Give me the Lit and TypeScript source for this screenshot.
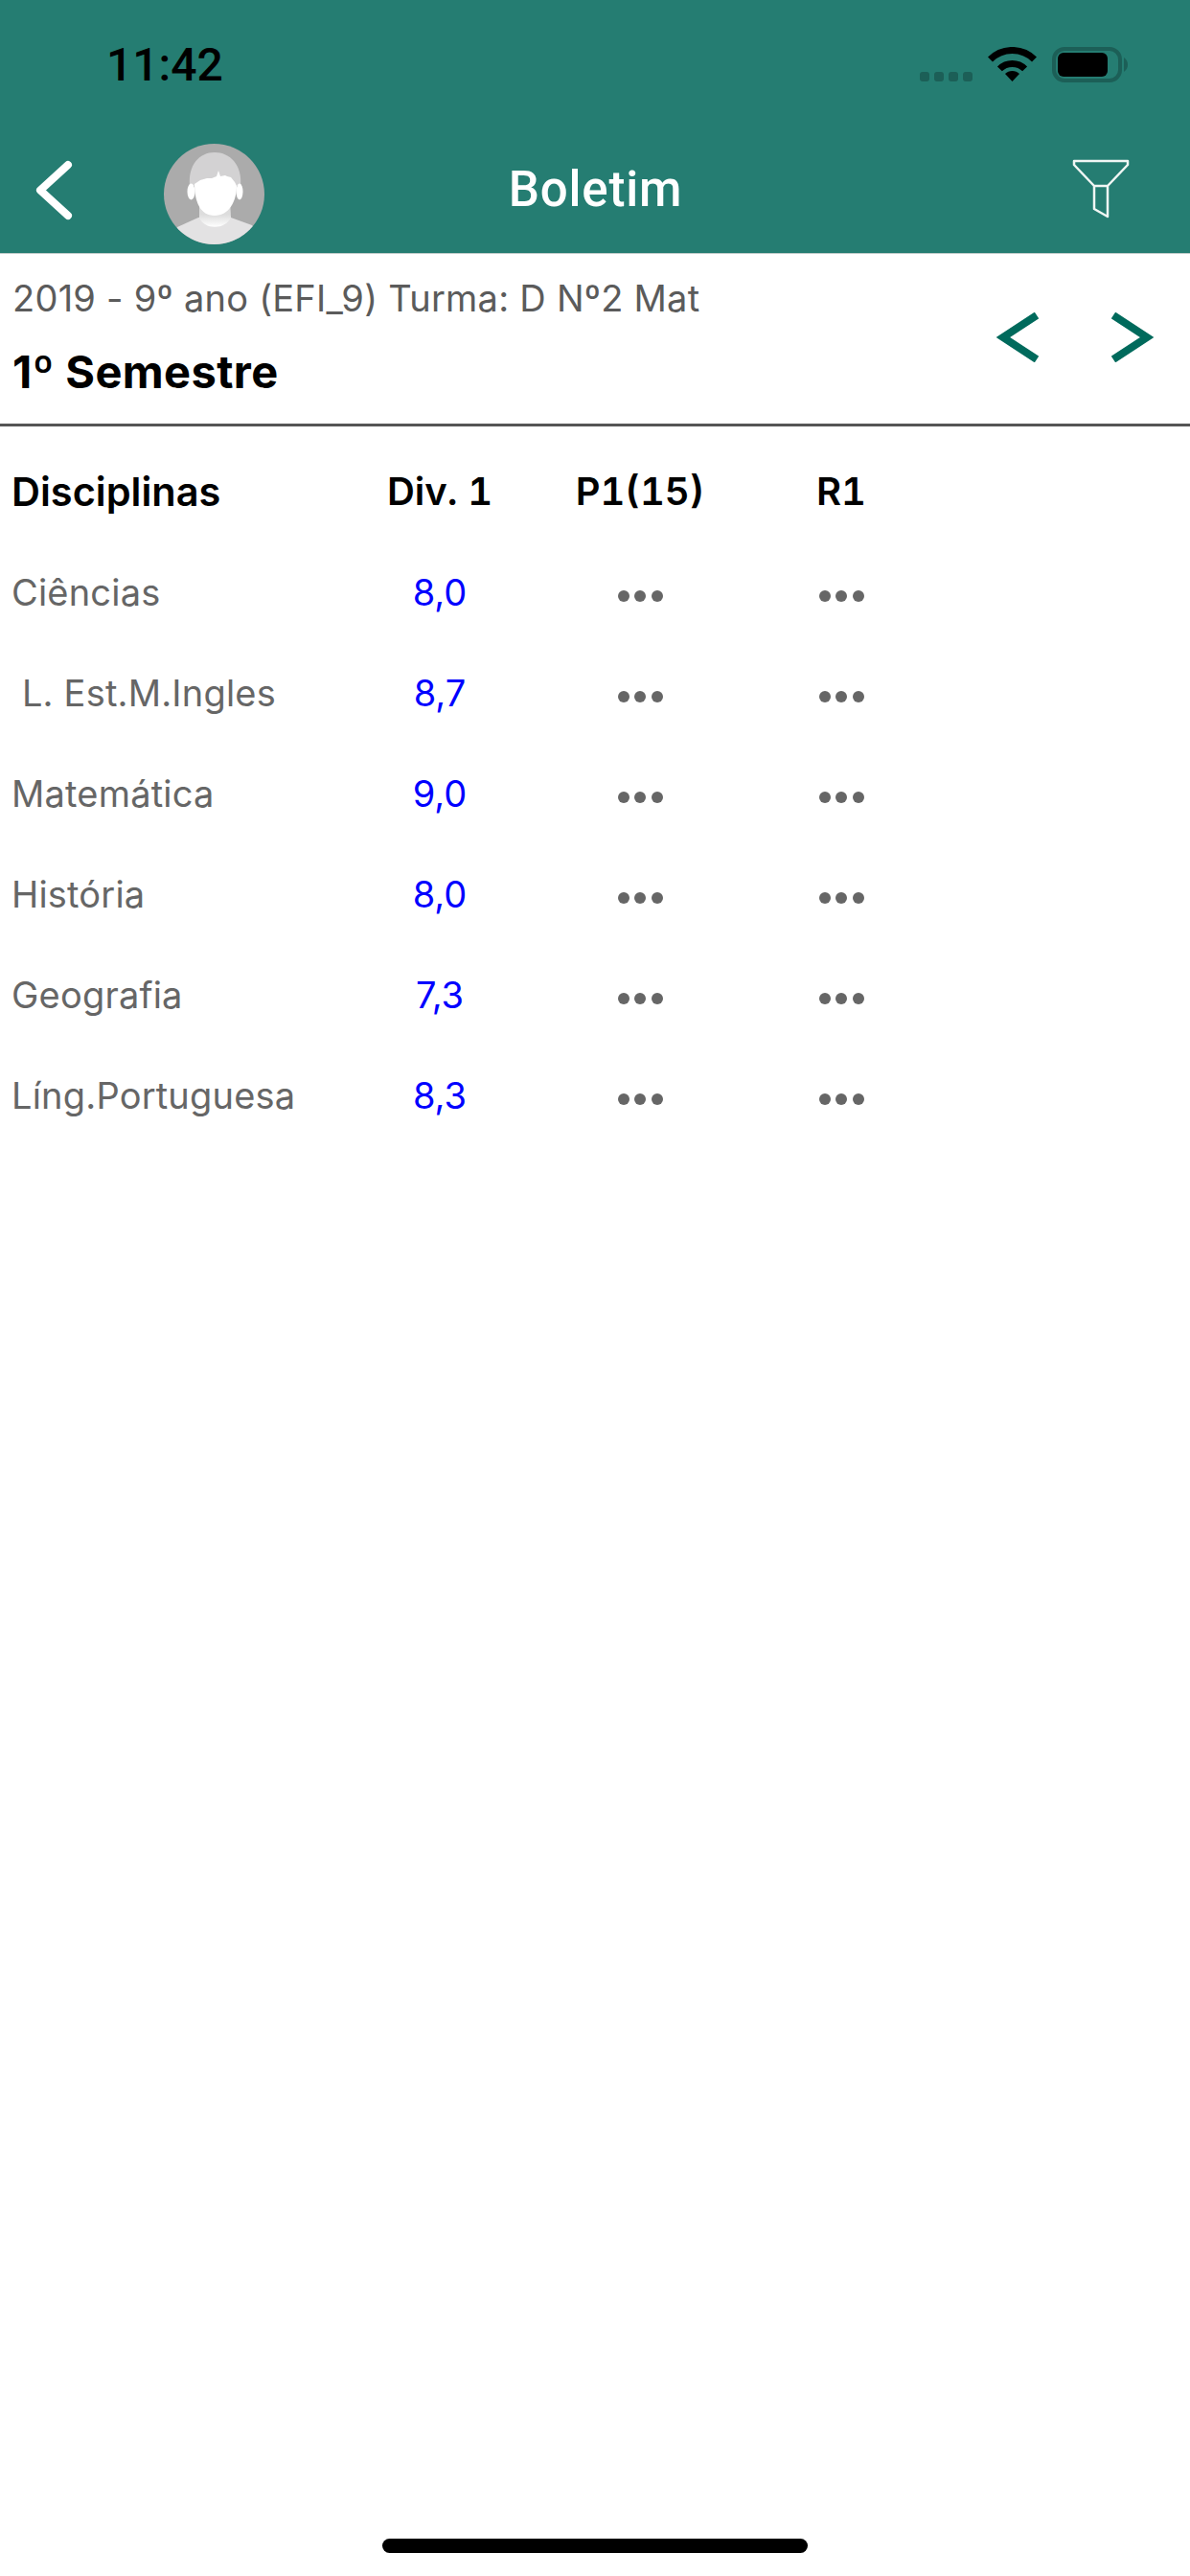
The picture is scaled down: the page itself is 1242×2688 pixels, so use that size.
import { LitElement, html, css } from "lit";
import { customElement } from "lit/decorators.js";

const rows = [
  { name: "Ciências", div: "8,0" },
  { name: " L. Est.M.Ingles", div: "8,7" },
  { name: "Matemática", div: "9,0" },
  { name: "História", div: "8,0" },
  { name: "Geografia", div: "7,3" },
  { name: "Líng.Portuguesa", div: "8,3" },
];

@customElement("app-root")
export class AppRoot extends LitElement {
  static styles = css`
    :host {
      display: block;
      width: 1242px;
      height: 2688px;
      background: #fff;
      font-family: Inter, "Liberation Sans", sans-serif;
      position: relative;
      overflow: hidden;
    }
    .head {
      height: 264px;
      background: #257d72;
      border-bottom: 1px solid #c4cfcc;
      display: flex;
      flex-direction: column;
    }
    .status {
      height: 132px;
      display: flex;
      align-items: flex-start;
      justify-content: space-between;
      padding: 0 65px 0 111px;
    }
    .time {
      margin-top: 42px;
      font-family: Roboto, sans-serif;
      font-size: 48px;
      line-height: 52px;
      font-weight: 500;
      color: #000;
    }
    .status-icons {
      display: block;
      margin-top: 49px;
    }
    .nav {
      position: relative;
      flex: 1;
      display: flex;
      align-items: flex-start;
    }
    .back {
      margin: 32px 0 0 34px;
      display: block;
    }
    .avatar {
      margin: 18px 0 0 91px;
      display: block;
    }
    .title {
      position: absolute;
      left: 1px;
      right: 0;
      top: 37px;
      text-align: center;
      color: #fff;
      font-family: Roboto, sans-serif;
      font-size: 51px;
      line-height: 58px;
      font-weight: 500;
      letter-spacing: 0.8px;
    }
    .filter {
      margin: 34px 63px 0 auto;
      display: block;
    }
    .term {
      height: 177px;
      border-bottom: 3px solid #555;
      display: flex;
      justify-content: space-between;
    }
    .term-text {
      padding: 22px 0 0 13px;
    }
    .line {
      font-size: 38px;
      line-height: 48px;
      letter-spacing: 0.25px;
      color: #5b5b5b;
      white-space: pre;
    }
    .sem {
      margin-top: 25px;
      font-size: 47px;
      line-height: 56px;
      font-weight: 700;
      letter-spacing: 0.4px;
      color: #000;
    }
    .arrows {
      display: flex;
      gap: 76px;
      padding: 61px 38px 0 0;
      align-items: flex-start;
    }
    .arrows svg {
      display: block;
    }
    .table {
      padding-top: 15px;
    }
    .row {
      display: grid;
      grid-template-columns: 343px 208px 210px 210px;
      height: 105px;
      align-items: center;
      padding-left: 12px;
    }
    .row.th {
      font-size: 40px;
      font-weight: 600;
      font-variant-numeric: tabular-nums;
      color: #000;
    }
    .row.th .first {
      font-size: 41.5px;
    }
    .row .c {
      text-align: center;
    }
    .name {
      font-size: 38px;
      letter-spacing: 0.2px;
      color: #666;
      white-space: pre;
    }
    .val {
      font-size: 38px;
      color: #0000ff;
    }
    .dots {
      display: flex;
      justify-content: center;
      gap: 5.5px;
      padding-top: 9px;
    }
    .dots i {
      width: 12px;
      height: 12px;
      border-radius: 50%;
      background: #666;
    }
    .home {
      position: absolute;
      left: 399px;
      top: 2649px;
      width: 444px;
      height: 15px;
      border-radius: 8px;
      background: #000;
    }
  `;

  private dots() {
    return html`<div class="dots"><i></i><i></i><i></i></div>`;
  }

  render() {
    return html`
      <div class="head">
        <div class="status">
          <div class="time">11:42</div>
          <svg class="status-icons" width="217" height="38" viewBox="0 0 217 38">
            <g fill="#1c5f57">
              <rect x="0" y="26" width="10" height="10" rx="3" />
              <rect x="15" y="26" width="10" height="10" rx="3" />
              <rect x="30" y="26" width="10" height="10" rx="3" />
              <rect x="45" y="26" width="10" height="10" rx="3" />
            </g>
            <path d="M73.5 13 A32.5 32.5 0 0 1 119.5 13" fill="none" stroke="#000" stroke-width="7" />
            <path d="M83.4 22.9 A18.5 18.5 0 0 1 109.6 22.9" fill="none" stroke="#000" stroke-width="7" />
            <path d="M96.5 36 L89 28 A10.6 10.6 0 0 1 104 28 Z" fill="#000" />
            <rect x="140" y="2" width="69" height="33" rx="11" fill="none" stroke="#1c5f57" stroke-width="4" />
            <rect x="144" y="6" width="52" height="25" rx="6" fill="#000" />
            <path d="M213 11 C216 13 217 16 217 18.5 C217 21 216 24 213 26 Z" fill="#1c5f57" />
          </svg>
        </div>
        <div class="nav">
          <svg class="back" width="46" height="70" viewBox="0 0 46 70">
            <path d="M37 8 L8 34.5 L37 61" fill="none" stroke="#fff" stroke-width="8" stroke-linecap="round" stroke-linejoin="round" />
          </svg>
          <svg class="avatar" width="105" height="105" viewBox="0 0 105 105">
            <defs>
              <clipPath id="av"><circle cx="52.5" cy="52.5" r="52.5" /></clipPath>
              <linearGradient id="neck" x1="0" y1="0" x2="0" y2="1">
                <stop offset="0.55" stop-color="#dddddd" />
                <stop offset="1" stop-color="#ffffff" />
              </linearGradient>
            </defs>
            <g clip-path="url(#av)">
              <rect width="105" height="105" fill="#ababab" />
              <path d="M27 44 C25 22 37 9 53 9 C69 9 82 22 80 44 Z" fill="#d3d2d3" />
              <path d="M14 87 L36 77 L70 77 L92 85 L105 105 L0 105 Z" fill="#e3e2e3" />
              <path d="M37 58 L37 77 C42 90 64 90 70 77 L69 58 Z" fill="url(#neck)" />
              <ellipse cx="28.5" cy="50" rx="4" ry="8.5" fill="#fff" />
              <ellipse cx="79" cy="50" rx="3.5" ry="8.5" fill="#fff" />
              <path d="M32 42 L38 38 L45 36 L50 36 L55 34 L57 28 L59 34 L64 33 L66 34 L70 35 L74 40 L76 44 C76 60 68 75 53 75 C38 75 32 60 32 42 Z" fill="#fff" />
            </g>
          </svg>
          <div class="title">Boletim</div>
          <svg class="filter" width="60" height="62" viewBox="0 0 60 62">
            <path d="M2 2 L58 2 L58 6 L37 28 L37 60 L23 52 L23 28 L2 6 Z M23 28 L37 28" fill="none" stroke="#f0f6f4" stroke-width="2.5" stroke-linejoin="round" />
          </svg>
        </div>
      </div>
      <div class="term">
        <div class="term-text">
          <div class="line">2019 - 9º ano (EFI_9) Turma: D Nº2 Mat</div>
          <div class="sem">1º Semestre</div>
        </div>
        <div class="arrows">
          <svg width="44" height="52" viewBox="0 0 44 52">
            <path d="M42 3 L7 26 L42 49" fill="none" stroke="#006a5c" stroke-width="8" />
          </svg>
          <svg width="44" height="52" viewBox="0 0 44 52">
            <path d="M2 3 L37 26 L2 49" fill="none" stroke="#006a5c" stroke-width="8" />
          </svg>
        </div>
      </div>
      <div class="table">
        <div class="row th">
          <div class="first">Disciplinas</div>
          <div class="c">Div. 1</div>
          <div class="c">P1(15)</div>
          <div class="c">R1</div>
        </div>
        ${rows.map(
          (r) => html`
            <div class="row">
              <div class="name">${r.name}</div>
              <div class="c val">${r.div}</div>
              ${this.dots()} ${this.dots()}
            </div>
          `
        )}
      </div>
      <div class="home"></div>
    `;
  }
}
